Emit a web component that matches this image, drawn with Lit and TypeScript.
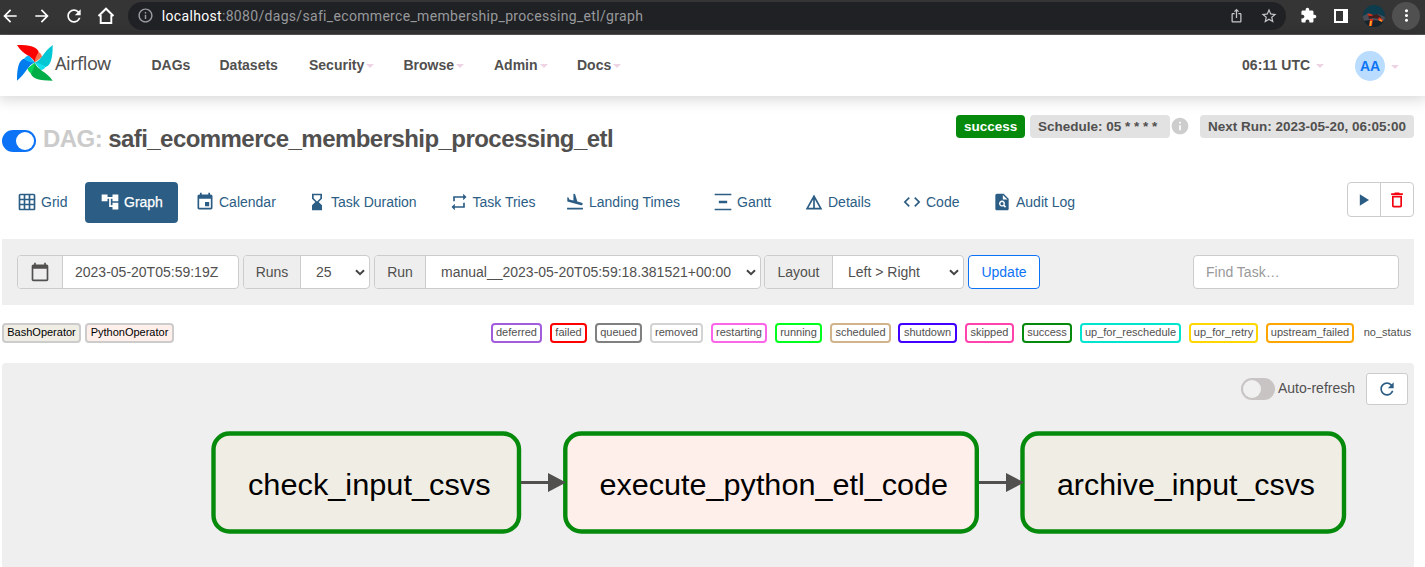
import { LitElement, html, svg, css } from "lit";
import { customElement } from "lit/decorators.js";

const P = {
  back: "M20 11H7.83l5.59-5.59L12 4l-8 8 8 8 1.41-1.41L7.83 13H20v-2z",
  forward: "M12 4l-1.41 1.41L16.17 11H4v2h12.17l-5.58 5.59L12 20l8-8z",
  reload: "M17.65 6.35C16.2 4.9 14.21 4 12 4c-4.42 0-7.99 3.58-7.99 8s3.57 8 7.99 8c3.73 0 6.84-2.55 7.73-6h-2.08c-.82 2.33-3.04 4-5.65 4-3.31 0-6-2.69-6-6s2.69-6 6-6c1.66 0 3.14.69 4.22 1.78L13 11h7V4l-2.35 2.35z",
  info: "M11 7h2v2h-2zm0 4h2v6h-2zm1-9C6.48 2 2 6.48 2 12s4.48 10 10 10 10-4.48 10-10S17.52 2 12 2zm0 18c-4.41 0-8-3.59-8-8s3.59-8 8-8 8 3.59 8 8-3.59 8-8 8z",
  infoFilled: "M12 2C6.48 2 2 6.48 2 12s4.48 10 10 10 10-4.48 10-10S17.52 2 12 2zm1 15h-2v-6h2v6zm0-8h-2V7h2v2z",
  share: "M16 5l-1.42 1.42-1.59-1.59V16h-1.98V4.83L9.42 6.42 8 5l4-4 4 4zm4 5v11c0 1.1-.9 2-2 2H6c-1.11 0-2-.9-2-2V10c0-1.11.89-2 2-2h3v2H6v11h12V10h-3V8h3c1.1 0 2 .89 2 2z",
  star: "M22 9.24l-7.19-.62L12 2 9.19 8.63 2 9.24l5.46 4.73L5.82 21 12 17.27 18.18 21l-1.63-7.03L22 9.24zM12 15.4l-3.76 2.27 1-4.28-3.32-2.88 4.38-.38L12 6.1l1.71 4.04 4.38.38-3.32 2.88 1 4.28L12 15.4z",
  puzzle: "M20.5 11H19V7c0-1.1-.9-2-2-2h-4V3.5C13 2.12 11.88 1 10.5 1S8 2.12 8 3.5V5H4c-1.1 0-1.99.9-1.99 2v3.8H3.5c1.49 0 2.7 1.21 2.7 2.7s-1.21 2.7-2.7 2.7H2V20c0 1.1.9 2 2 2h3.8v-1.5c0-1.49 1.21-2.7 2.7-2.7 1.49 0 2.7 1.21 2.7 2.7V22H17c1.1 0 2-.9 2-2v-4h1.5c1.38 0 2.5-1.12 2.5-2.5S21.88 11 20.5 11z",
  dots: "M12 8c1.1 0 2-.9 2-2s-.9-2-2-2-2 .9-2 2 .9 2 2 2zm0 2c-1.1 0-2 .9-2 2s.9 2 2 2 2-.9 2-2-.9-2-2-2zm0 6c-1.1 0-2 .9-2 2s.9 2 2 2 2-.9 2-2-.9-2-2-2z",
  grid: "M20 2H4c-1.1 0-2 .9-2 2v16c0 1.1.9 2 2 2h16c1.1 0 2-.9 2-2V4c0-1.1-.9-2-2-2zM8 20H4v-4h4v4zm0-6H4v-4h4v4zm0-6H4V4h4v4zm6 12h-4v-4h4v4zm0-6h-4v-4h4v4zm0-6h-4V4h4v4zm6 12h-4v-4h4v4zm0-6h-4v-4h4v4zm0-6h-4V4h4v4z",
  tree: "M22 11V3h-7v3H9V3H2v8h7V8h2v10h4v3h7v-8h-7v3h-2V8h2v3z",
  event: "M17 12h-5v5h5v-5zM16 1v2H8V1H6v2H5c-1.11 0-1.99.9-1.99 2L3 19c0 1.1.89 2 2 2h14c1.1 0 2-.9 2-2V5c0-1.1-.9-2-2-2h-1V1h-2zm3 18H5V8h14v11z",
  hourglass: "M18 22l-.01-6L14 12l3.99-4.01L18 2H6v6l4 4-4 3.99V22h12zM8 7.5V4h8v3.5l-4 4-4-4z",
  repeat: "M7 7h10v3l4-4-4-4v3H5v6h2V7zm10 10H7v-3l-4 4 4 4v-3h12v-6h-2v4z",
  landing: "M2.5 19h19v2h-19zm16.84-3.15c.8.21 1.62-.26 1.84-1.06.21-.8-.26-1.62-1.06-1.84l-5.31-1.42-2.76-9.02L10.12 2v8.28L5.15 8.95l-.93-2.32-1.45-.39v5.17l16.57 4.44z",
  gantt: "M22 2v2H2V2h20zM7 10.5v3h10v-3H7zM2 20v2h20v-2H2z",
  details: "M12 3L2 21h20L12 3zm1 5.92L18.6 19H13V8.92zm-2 0V19H5.4L11 8.92z",
  code: "M9.4 16.6L4.8 12l4.6-4.6L8 6l-6 6 6 6 1.4-1.4zm5.2 0l4.6-4.6-4.6-4.6L16 6l6 6-6 6-1.4-1.4z",
  audit: "M14 2H6c-1.1 0-2 .9-2 2v16c0 1.1.9 2 2 2h12c1.1 0 2-.9 2-2V8l-6-6zM13 9V3.5L18.5 9H13zm2.6 9.8l-1.8-1.8a3.6 3.6 0 1 1 1.3-1.3l1.8 1.8-1.3 1.3zM12 12.1a1.9 1.9 0 1 0 0 3.8 1.9 1.9 0 0 0 0-3.8z",
  play: "M7 5v14l11-7z",
  trash: "M6 19c0 1.1.9 2 2 2h8c1.1 0 2-.9 2-2V7H6v12zM8 9h8v10H8V9zm7.5-5l-1-1h-5l-1 1H5v2h14V4h-3.5z",
  calendar: "M20 3h-1V1h-2v2H7V1H5v2H4c-1.1 0-2 .9-2 2v16c0 1.1.9 2 2 2h16c1.1 0 2-.9 2-2V5c0-1.1-.9-2-2-2zm0 18H4V8h16v13z",
};

const icon = (d: string, size = 20) =>
  html`<svg class="icon" width=${size} height=${size} viewBox="0 0 24 24"><path fill="currentColor" fill-rule="evenodd" d=${d}></path></svg>`;

const chevron = html`<svg class="chev" width="10" height="7" viewBox="0 0 10 7"><path d="M1 1.2l4 4 4-4" fill="none" stroke="#444" stroke-width="2"></path></svg>`;

const MENU: [string, number, boolean][] = [
  ["DAGs", 68, false], ["Datasets", 89.5, false], ["Security", 94.5, true],
  ["Browse", 90.5, true], ["Admin", 83, true], ["Docs", 60, true],
];
const TABS: [string, string, number][] = [
  ["Grid", "grid", 81], ["Graph", "tree", 93], ["Calendar", "event", 110],
  ["Task Duration", "hourglass", 139.5], ["Task Tries", "repeat", 114.5],
  ["Landing Times", "landing", 146], ["Gantt", "gantt", 89],
  ["Details", "details", 96], ["Code", "code", 88], ["Audit Log", "audit", 115],
];
const STATES: [string, string, number][] = [
  ["deferred", "mediumpurple", 51], ["failed", "red", 37], ["queued", "gray", 47],
  ["removed", "lightgrey", 53], ["restarting", "violet", 56], ["running", "lime", 47],
  ["scheduled", "tan", 61], ["shutdown", "blue", 59], ["skipped", "hotpink", 49],
  ["success", "green", 50], ["up_for_reschedule", "turquoise", 101],
  ["up_for_retry", "gold", 69], ["upstream_failed", "orange", 88], ["no_status", "none", 53],
];
const NODES: [string, number, number, string, number, number][] = [
  ["check_input_csvs", 213.5, 305.5, "#f0ede4", 248, 242.5],
  ["execute_python_etl_code", 565.3, 411.5, "#ffefeb", 599.5, 348.5],
  ["archive_input_csvs", 1022.5, 321.5, "#f0ede4", 1057, 258],
];

@customElement("app-root")
export class AppRoot extends LitElement {
  static styles = css`
    :host { display: block; width: 1425px; height: 567px; overflow: hidden; background: #fff; color: #51504f; font: 14px/20px "Liberation Sans", Arial, sans-serif; }
    * { box-sizing: border-box; }
    .icon { display: block; flex: none; }
    .row { display: flex; align-items: center; white-space: nowrap; }
    .chrome { height: 35px; background: #353535; border-bottom: 1px solid #5b5757; color: #fff; padding: 0 5px 3px 0; }
    .chrome-nav { width: 128px; gap: 12px; padding-left: 0; }
    .pill { width: 1160px; height: 28px; border-radius: 14px; background: #202124; padding: 0 8px 0 9px; color: #9aa0a6; }
    .pill-grow { flex: 1; margin-left: 8px; font: 14px/28px Roboto, sans-serif; letter-spacing: 0.32px; color: #97999c; }
    .pill-grow b { font-weight: 400; color: #fff; }
    .pill-tools { gap: 16px; color: #c4c7c9; }
    .ext { margin-left: 14px; gap: 0; }
    .ext-panel { margin-left: 14px; }
    .ext-avatar { margin-left: 12px; }
    .ext-menu { margin-left: 7px; width: 28px; height: 28px; border-radius: 50%; background: #505050; display: grid; place-items: center; }
    .navbar { height: 61px; background: #fff; box-shadow: 0 1px 14px 2px rgba(0,0,0,.17); padding: 0 0 1px 17px; font-weight: 700; }
    .brand { width: 134.5px; gap: 2px; padding-bottom: 5px; }
    .brand span { font: 400 18px/24px "Noto Sans", sans-serif; letter-spacing: -0.5px; }
    .menu { flex: 1; }
    .menu-item { gap: 2px; }
    .caret { width: 0; height: 0; border: 4px solid transparent; border-top-color: #edd3e3; border-bottom: 0; margin-top: 2px; }
    .clock { gap: 6px; width: 113px; letter-spacing: 0.05px; }
    .user { width: 70px; gap: 6px; padding-top: 1px; }
    .avatar { width: 30px; height: 30px; border-radius: 50%; background: #b9dcff; color: #0d75f5; text-align: center; line-height: 31px; }
    .head { height: 86px; padding-left: 2px; align-items: flex-start; justify-content: space-between; }
    .title { padding-top: 29px; font-weight: 700; font-size: 24px; line-height: 28px; letter-spacing: -0.55px; }
    .title i { font-style: normal; color: #cbcbcb; margin: 0 6px 0 7px; }
    .switch { width: 34px; height: 22px; border-radius: 11px; padding: 2px; background: #0d73f6; display: flex; justify-content: flex-end; margin-top: 4px; }
    .switch::before { content: ""; width: 18px; height: 18px; border-radius: 50%; background: #fff; }
    .switch.off { background: #c8c4c3; justify-content: flex-start; margin: 0; }
    .switch.off::before { background: #f0f0f0; }
    .badges { padding: 19px 11px 0 0; font-size: 13.5px; font-weight: 700; }
    .badge { height: 23px; border-radius: 4px; background: #e2e2e2; line-height: 23px; padding-left: 8px; }
    .badge.ok { width: 69px; background: #058a0c; color: #fff; margin-right: 5px; }
    .badge.sched { width: 140px; }
    .badge.next { width: 214px; margin-left: 10px; }
    .hint { color: #cdcdcd; margin-top: -2px; }
    .tabs { height: 41px; padding: 0 11px 0 2px; gap: 2px; color: #2c5d85; }
    .tab { height: 41px; padding: 0 0 1px 15px; gap: 4px; border-radius: 4px; }
    .tab.active { background: #2c5d85; color: #fff; -webkit-text-stroke: .25px #fff; }
    .actions { margin: -6px 0 0 auto; width: 67px; height: 35px; border: 1px solid #ccc; border-radius: 4px; }
    .actions div { flex: 1; height: 33px; display: grid; place-items: center; }
    .actions .del { border-left: 1px solid #ccc; color: #f2000d; }
    .filters { margin: 16px 11px 0 2px; height: 66px; padding: 0 15px; background: #efefef; }
    .group { height: 34px; border: 1px solid #ccc; border-radius: 4px; background: #fff; margin-right: 4px; overflow: hidden; }
    .addon { height: 32px; line-height: 32px; background: #eee; border-right: 1px solid #ccc; display: grid; place-items: center; }
    .value { flex: 1; padding: 0 4px 0 15px; display: flex; justify-content: space-between; align-items: center; }
    .update { width: 72px; height: 34px; border: 1px solid #0d73f6; border-radius: 4px; background: #fff; color: #0d73f6; text-align: center; line-height: 32px; }
    .find { margin-left: auto; width: 206px; height: 34px; border: 1px solid #ccc; border-radius: 4px; background: #fff; padding-left: 12px; line-height: 32px; color: #999; }
    .legend { height: 58px; padding: 0 11px 2px 2px; font-size: 11px; }
    .ops { flex: 1; gap: 4px; color: #000; }
    .states { gap: 8px; }
    .tag { height: 20px; border: 2px solid #ccc; border-radius: 4px; line-height: 15px; text-align: center; }
    .bash { width: 79px; background: #f0ede4; }
    .python { width: 89px; background: #ffefeb; }
    .mediumpurple { border-color: #a25ddc; } .red { border-color: #f00; } .gray { border-color: #808080; }
    .lightgrey { border-color: #d3d3d3; } .violet { border-color: #fb66e9; } .lime { border-color: #00ff1e; }
    .tan { border-color: #d2b48c; } .blue { border-color: #4100ff; margin-left: -1px; } .hotpink { border-color: #ff43ad; }
    .green { border-color: #058a0c; } .turquoise { border-color: #00e5d0; } .gold { border-color: #ffd700; }
    .orange { border-color: #ffa500; } .none { border-color: transparent; margin-left: -1px; }
    .graph { margin: 0 11px 0 2px; height: 204px; background: #efefef; border-radius: 4px 4px 0 0; padding-top: 10px; }
    .graph-bar { height: 32px; justify-content: flex-end; padding-right: 6px; }
    .graph-bar span { margin: 0 10px 2px 3px; width: 78px; }
    .refresh { width: 42px; height: 32px; border: 1px solid #ccc; border-radius: 3px; background: #fff; color: #2c5d85; display: grid; place-items: center; padding-bottom: 1px; }
    .canvas { display: block; }
    .node { font-size: 30px; fill: #000; }
  `;

  render() {
    return html`
      <div class="chrome row">
        <div class="chrome-nav row">${icon(P.back)}${icon(P.forward)}${icon(P.reload)}
          <svg class="icon" width="20" height="20" viewBox="0 0 20 20"><path d="M2.500 10L10 2.700 17.500 10M4.700 9v8h10.600V9" fill="none" stroke="#fff" stroke-width="1.900"></path></svg>
        </div>
        <div class="pill row">
          ${icon(P.info, 17)}
          <div class="pill-grow"><b>localhost</b>:8080/dags/safi_ecommerce_membership_processing_etl/graph</div>
          <div class="pill-tools row">${icon(P.share, 15)}${icon(P.star, 18)}</div>
        </div>
        <div class="ext row">
          ${icon(P.puzzle, 17)}
          <svg class="icon ext-panel" width="20" height="20" viewBox="0 0 20 20"><path fill="#fff" fill-rule="evenodd" d="M3 3h14v14H3zM5 5v10h7V5z"></path></svg>
          <svg class="icon ext-avatar" width="22" height="22" viewBox="0 0 22 22">
            <clipPath id="c"><circle cx="11" cy="11" r="11"></circle></clipPath>
            <g clip-path="url(#c)"><path fill="#0d3c4c" d="M0 0h22v22H0z"></path><path fill="#4b4d57" d="M0 11l6-3 5 2 4-1 7 3v4H0z"></path><path fill="#17232b" d="M0 16l7-1 15 1v6H0z"></path><path fill="#40201f" d="M5 9l5 1 4-1 4 3v2l-8-1-4 1z"></path><path fill="#e2321c" d="M4 8.500l5 1 1 1-4 .5zM16 12l4 3-1 2-4-2zM7 14h3l-1 7H6z"></path><path fill="#ffa51e" d="M7 16h2l-1 5H6.500zM17 14l2.500 2-.5.800-3-1.300z"></path></g>
          </svg>
          <div class="ext-menu">${icon(P.dots, 19)}</div>
        </div>
      </div>
      <div class="navbar row">
        <div class="brand row">
          <svg class="icon" width="36" height="36" viewBox="0 0 36 36">
            <path fill="#ff0000" d="M0 0C13 0 20 1.800 21.800 7L17.800 17.600C16 11 6 10.500 0 0z"></path>
            <path fill="#ff6e4a" d="M21.800 7Q25 9 25 12L17.800 17.600Q17.500 13 21.800 7z"></path>
            <path fill="#00c7d4" d="M35.700 0C35.700 14 33.500 20.500 28.500 22L17.800 17.600C25 15 26 7 35.700 0z"></path>
            <path fill="#11e1ee" d="M28.500 22Q27 25 23.500 25L17.800 17.600Q23 18 28.500 22z"></path>
            <path fill="#00ad46" d="M35.700 35.700C21.500 35.500 15.500 33.800 13.800 28.500L17.800 17.600C20 25 29.500 26.500 35.700 35.700z"></path>
            <path fill="#04d659" d="M13.800 28.500Q11 26.500 10.500 23.500L17.800 17.600Q18 23 13.800 28.500z"></path>
            <path fill="#017cee" d="M0 35.700C0 22 2 15.500 7 13.800L17.800 17.600C10.500 20 9.500 28.500 0 35.700z"></path>
            <path fill="#0cb6ff" d="M7 13.800Q9 10.800 12 10.500L17.800 17.600Q12.500 18 7 13.800z"></path>
          </svg>
          <span>Airflow</span>
        </div>
        <div class="menu row">${MENU.map(([t, w, c]) => html`<div class="menu-item row" style="width:${w}px">${t}${c ? html`<div class="caret"></div>` : ""}</div>`)}</div>
        <div class="clock row">06:11 UTC<div class="caret"></div></div>
        <div class="user row"><div class="avatar">AA</div><div class="caret"></div></div>
      </div>
      <div class="head row">
        <div class="title row"><div class="switch"></div><i>DAG:</i>safi_ecommerce_membership_processing_etl</div>
        <div class="badges row">
          <div class="badge ok">success</div><div class="badge sched">Schedule: 05 * * * *</div>
          <div class="hint">${icon(P.infoFilled, 20)}</div>
          <div class="badge next">Next Run: 2023-05-20, 06:05:00</div>
        </div>
      </div>
      <div class="tabs row">
        ${TABS.map(([t, i, w]) => html`<div class="tab row ${t === "Graph" ? "active" : ""}" style="width:${w}px">${icon(P[i as keyof typeof P])}<span>${t}</span></div>`)}
        <div class="actions row"><div>${icon(P.play)}</div><div class="del">${icon(P.trash)}</div></div>
      </div>
      <div class="filters row">
        <div class="group row" style="width:222px"><div class="addon" style="width:45px">${icon(P.calendar)}</div><div class="value" style="padding-left:12px">2023-05-20T05:59:19Z</div></div>
        <div class="group row" style="width:127px"><div class="addon" style="width:57px">Runs</div><div class="value">25${chevron}</div></div>
        <div class="group row" style="width:387px;margin-right:3px"><div class="addon" style="width:51px">Run</div><div class="value">manual__2023-05-20T05:59:18.381521+00:00${chevron}</div></div>
        <div class="group row" style="width:200px"><div class="addon" style="width:68px">Layout</div><div class="value">Left &gt; Right${chevron}</div></div>
        <div class="update">Update</div>
        <div class="find">Find Task…</div>
      </div>
      <div class="legend row">
        <div class="ops row"><div class="tag bash">BashOperator</div><div class="tag python">PythonOperator</div></div>
        <div class="states row">${STATES.map(([t, c, w]) => html`<div class="tag ${c}" style="width:${w}px">${t}</div>`)}</div>
      </div>
      <div class="graph">
        <div class="graph-bar row"><div class="switch off"></div><span>Auto-refresh</span><div class="refresh">${icon(P.reload)}</div></div>
        <svg class="canvas" width="1412" height="162" viewBox="2 405 1412 162">
          ${NODES.map(([t, x, w, f, tx, tw]) => svg`<rect x=${x} y="433.500" width=${w} height="98" rx="16" fill=${f} stroke="#058a0c" stroke-width="4.400"></rect><text class="node" x=${tx} y="494.500" textLength=${tw} lengthAdjust="spacingAndGlyphs">${t}</text>`)}
          <path d="M521 482.500h30M979 482.500h30" stroke="#51504f" stroke-width="3"></path>
          <path d="M548 473l18 9.500-18 9.500zM1006 473l18 9.500-18 9.500z" fill="#51504f"></path>
        </svg>
      </div>`;
  }
}
